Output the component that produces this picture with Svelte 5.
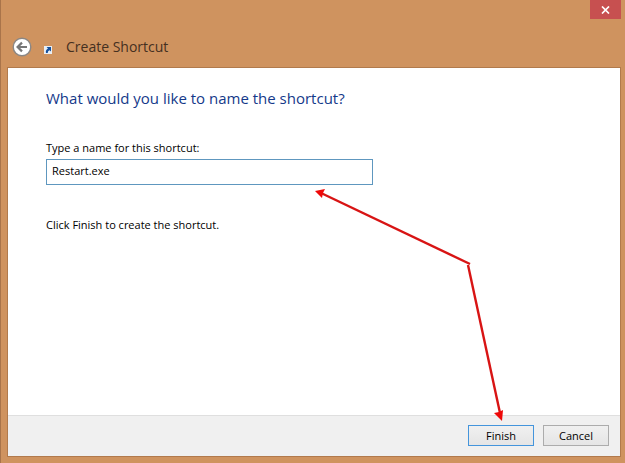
<script>
    let name = $state('Restart.exe')
</script>

<div class="window">
    <header>
        <button class="close" aria-label="Close">
            <svg width="9" height="8" viewBox="0 0 9 8">
                <path d="M1 0.5 L8 7.5 M8 0.5 L1 7.5" stroke="#fff" stroke-width="1.7" />
            </svg>
        </button>
        <div class="title">
            <button class="back" aria-label="Back">
                <svg width="20" height="20" viewBox="0 0 20 20">
                    <circle cx="10" cy="10" r="8.8" fill="#fff" stroke="#8b8784" stroke-width="1.4" />
                    <path d="M15 10 H6 M10 5.6 L5.6 10 L10 14.4" fill="none" stroke="#777" stroke-width="2.2" />
                </svg>
            </button>
            <svg class="shortcut" width="8" height="8" viewBox="0 0 8 8">
                <rect width="8" height="8" fill="#e8eef4" />
                <path d="M2.6 1 H7 V5.4 L5.6 4.2 C4.2 4.8 3.8 5.6 3.8 7 H2 C1.4 5 2.4 3.4 4 2.6 Z" fill="#15509c" />
            </svg>
            <h1>Create Shortcut</h1>
        </div>
    </header>

    <form class="panel">
        <main>
            <h2>What would you like to name the shortcut?</h2>
            <label for="name">Type a name for this shortcut:</label>
            <input id="name" type="text" bind:value={name} />
            <p>Click Finish to create the shortcut.</p>
        </main>
        <footer>
            <button type="button" class="action finish">Finish</button>
            <button type="button" class="action">Cancel</button>
        </footer>
    </form>

    <!-- arrows pointing at the name field and the Finish button -->
    <svg class="arrows" width="190" height="234" viewBox="0 0 190 234">
        <g stroke="#d81414" stroke-width="2.4">
            <path d="M155 77 L6 6" />
            <path d="M153 78 L185 226" />
        </g>
        <path d="M0 4 L10 2 L8 6 L7 11 Z" fill="#ee0808" />
        <path d="M187 234 L179 226 L184 225 L188 223 Z" fill="#ee0808" />
    </svg>
</div>

<style>
    :global(body) {
        margin: 0;
    }

    .window {
        position: relative;
        box-sizing: border-box;
        min-height: 100vh;
        padding: 0 4px 6px 7px;
        display: flex;
        flex-direction: column;
        background: #cf935f;
        box-shadow: inset 1px 0 #a9744a;
        font-family: "Open Sans", "Noto Sans", sans-serif;
        font-size: 11px;
        color: #000;
    }

    header {
        height: 67px;
        display: flex;
        flex-direction: column;
    }

    .close {
        align-self: flex-end;
        width: 31px;
        height: 19px;
        padding: 0;
        border: 0;
        background: #c75050;
        display: flex;
        align-items: center;
        justify-content: center;
    }

    .title {
        display: flex;
        align-items: center;
        padding: 16px 5px 0;
    }

    .back {
        width: 20px;
        height: 20px;
        padding: 0;
        border: 0;
        background: none;
    }

    .back svg {
        display: block;
    }

    .shortcut {
        margin: 5px 14px 0 12px;
    }

    h1 {
        margin: 0;
        font-size: 14px;
        line-height: 24px;
        font-weight: 400;
        color: #45301f;
    }

    .panel {
        flex: 1;
        display: flex;
        flex-direction: column;
        border: 1px solid #b17a4c;
        background: #fff;
    }

    main {
        flex: 1;
        display: flex;
        flex-direction: column;
        align-items: flex-start;
        padding: 18px 38px;
    }

    h2 {
        margin: 0 0 30px;
        font-size: 15px;
        line-height: 24px;
        font-weight: 400;
        color: #14398a;
    }

    label,
    p {
        line-height: 16px;
    }

    input {
        box-sizing: border-box;
        width: 100%;
        max-width: 327px;
        height: 26px;
        margin: 3px 0 0;
        padding: 0 5px 4px;
        border: 1px solid #5e97bf;
        background: #fff;
        font: inherit;
        color: inherit;
        outline: none;
    }

    p {
        margin: 32px 0 0;
    }

    footer {
        display: flex;
        justify-content: flex-end;
        gap: 9px;
        padding: 9px 11px 10px;
        border-top: 1px solid #dfdfdf;
        background: #f0f0f0;
    }

    .action {
        box-sizing: border-box;
        width: 66px;
        height: 21px;
        padding: 0;
        border: 1px solid #acacac;
        background: linear-gradient(#f0f0f0, #e5e5e5);
        font: inherit;
        color: inherit;
    }

    .finish {
        border-color: #4495dc;
    }

    .arrows {
        position: absolute;
        left: 315px;
        top: 187px;
        pointer-events: none;
    }
</style>
